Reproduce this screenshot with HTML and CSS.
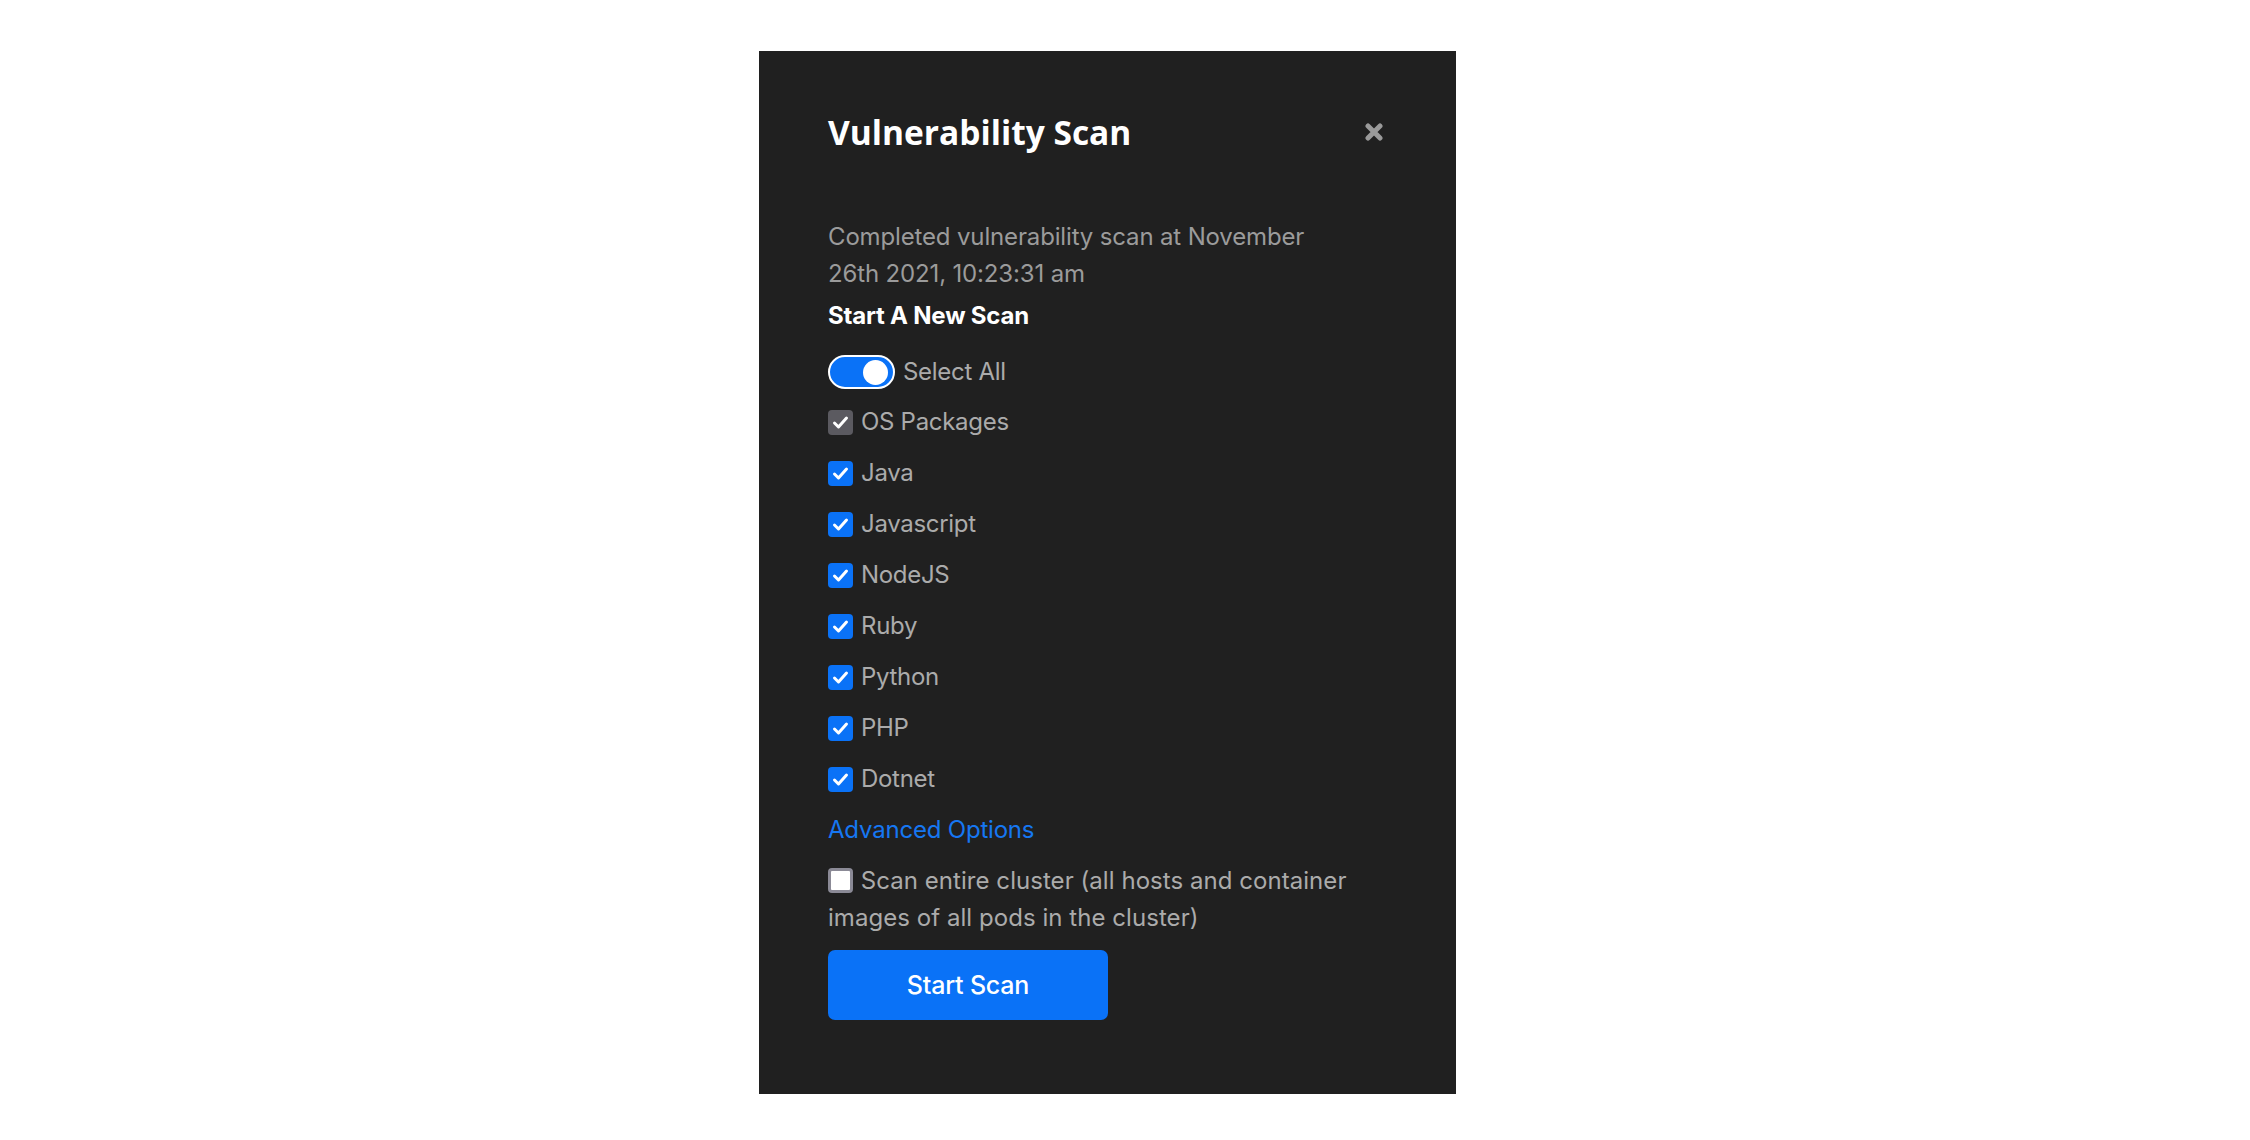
FILE: index.html
```html
<!DOCTYPE html>
<html lang="en">
<head>
<meta charset="utf-8">
<title>Vulnerability Scan</title>
<link rel="stylesheet" href="styles.css">
</head>
<body>
<div class="modal">
  <div class="header">
    <h1 class="title">Vulnerability Scan</h1>
    <button class="close" aria-label="Close">
      <svg width="18" height="18" viewBox="0 0 18 18"><path d="M3 3L15 15M15 3L3 15" stroke="#9a9a9a" stroke-width="5" stroke-linecap="round"/></svg>
    </button>
  </div>
  <div class="body">
    <p class="desc">Completed vulnerability scan at November 26th 2021, 10:23:31 am</p>
    <div class="subtitle">Start A New Scan</div>
    <label class="toggle-row">
      <span class="toggle"><span class="knob"></span></span>
      <span class="label">Select All</span>
    </label>
    <label class="row"><span class="box box-disabled"><svg viewBox="0 0 25 25" width="25" height="25"><path d="M6.5 13l4 4 8-9" fill="none" stroke="#fff" stroke-width="3" stroke-linecap="round" stroke-linejoin="round"/></svg></span><span class="label">OS Packages</span></label>
    <label class="row"><span class="box"><svg viewBox="0 0 25 25" width="25" height="25"><path d="M6.5 13l4 4 8-9" fill="none" stroke="#fff" stroke-width="3" stroke-linecap="round" stroke-linejoin="round"/></svg></span><span class="label">Java</span></label>
    <label class="row"><span class="box"><svg viewBox="0 0 25 25" width="25" height="25"><path d="M6.5 13l4 4 8-9" fill="none" stroke="#fff" stroke-width="3" stroke-linecap="round" stroke-linejoin="round"/></svg></span><span class="label">Javascript</span></label>
    <label class="row"><span class="box"><svg viewBox="0 0 25 25" width="25" height="25"><path d="M6.5 13l4 4 8-9" fill="none" stroke="#fff" stroke-width="3" stroke-linecap="round" stroke-linejoin="round"/></svg></span><span class="label">NodeJS</span></label>
    <label class="row"><span class="box"><svg viewBox="0 0 25 25" width="25" height="25"><path d="M6.5 13l4 4 8-9" fill="none" stroke="#fff" stroke-width="3" stroke-linecap="round" stroke-linejoin="round"/></svg></span><span class="label">Ruby</span></label>
    <label class="row"><span class="box"><svg viewBox="0 0 25 25" width="25" height="25"><path d="M6.5 13l4 4 8-9" fill="none" stroke="#fff" stroke-width="3" stroke-linecap="round" stroke-linejoin="round"/></svg></span><span class="label">Python</span></label>
    <label class="row"><span class="box"><svg viewBox="0 0 25 25" width="25" height="25"><path d="M6.5 13l4 4 8-9" fill="none" stroke="#fff" stroke-width="3" stroke-linecap="round" stroke-linejoin="round"/></svg></span><span class="label">PHP</span></label>
    <label class="row"><span class="box"><svg viewBox="0 0 25 25" width="25" height="25"><path d="M6.5 13l4 4 8-9" fill="none" stroke="#fff" stroke-width="3" stroke-linecap="round" stroke-linejoin="round"/></svg></span><span class="label">Dotnet</span></label>
    <a class="link" href="#">Advanced Options</a>
    <label class="cluster"><span class="box box-empty"></span> Scan entire cluster (all hosts and container images of all pods in the cluster)</label>
    <button class="start">Start Scan</button>
  </div>
</div>
</body>
</html>
```

FILE: styles.css
```css
html, body {
  margin: 0;
  padding: 0;
  background: #ffffff;
}

.modal {
  box-sizing: border-box;
  width: 697px;
  height: 1043px;
  margin: 51px 0 0 759px;
  background: #202020;
  padding: 61px 68px 0 69px;
  font-family: Inter, "Noto Sans", sans-serif;
}

.header {
  display: flex;
  justify-content: space-between;
  align-items: center;
  height: 40px;
}

.title {
  margin: 0;
  font-family: "Open Sans", "Noto Sans", sans-serif;
  font-weight: 700;
  font-size: 33.5px;
  line-height: 40px;
  color: #ffffff;
  letter-spacing: 0;
}

.close {
  background: none;
  border: 0;
  padding: 0;
  margin-right: 5px;
  width: 18px;
  height: 18px;
  display: flex;
}

.body {
  display: flex;
  flex-direction: column;
  align-items: flex-start;
  margin-top: 66px;
}

.desc {
  margin: 0;
  max-width: 500px;
  font-size: 24px;
  line-height: 37px;
  color: #9b9b9b;
  letter-spacing: -0.15px;
}

.subtitle {
  margin-top: 9px;
  font-size: 24px;
  line-height: 30px;
  font-weight: 700;
  color: #ffffff;
  letter-spacing: -0.2px;
}

.toggle-row {
  display: flex;
  align-items: center;
  gap: 8px;
  margin-top: 24px;
  height: 34px;
}

.toggle {
  box-sizing: border-box;
  width: 67px;
  height: 34px;
  border-radius: 17px;
  border: 2px solid #ffffff;
  background: #0a72f7;
  display: flex;
  align-items: center;
  justify-content: flex-end;
  padding-right: 5px;
}

.knob {
  width: 25px;
  height: 25px;
  border-radius: 50%;
  background: #ffffff;
}

.label {
  font-size: 24px;
  line-height: 36px;
  color: #ababab;
  letter-spacing: -0.3px;
}

.row {
  display: flex;
  align-items: center;
  gap: 8px;
  height: 36px;
  margin-top: 15px;
}

.row:first-of-type {
  margin-top: 16px;
}

.box {
  box-sizing: border-box;
  width: 25px;
  height: 25px;
  border-radius: 4px;
  background: #0a72f7;
  display: flex;
  flex: none;
}

.box-disabled {
  background: #5b5a60;
}

.box-empty {
  background: #ffffff;
  border: 3px solid #8b8a96;
  display: inline-block;
  vertical-align: -4px;
  margin-right: 1px;
}

.link {
  margin-top: 15px;
  font-size: 24px;
  line-height: 36px;
  color: #1677f2;
  text-decoration: none;
  letter-spacing: -0.2px;
}

.cluster {
  margin-top: 14px;
  font-size: 24px;
  line-height: 37px;
  color: #ababab;
  letter-spacing: 0.05px;
  max-width: 560px;
}

.start {
  margin-top: 14px;
  width: 280px;
  height: 70px;
  border: 0;
  border-radius: 7px;
  background: #0a72f7;
  color: #ffffff;
  font-family: Inter, "Noto Sans", sans-serif;
  font-size: 25px;
  font-weight: 500;
  letter-spacing: -0.2px;
}
```
